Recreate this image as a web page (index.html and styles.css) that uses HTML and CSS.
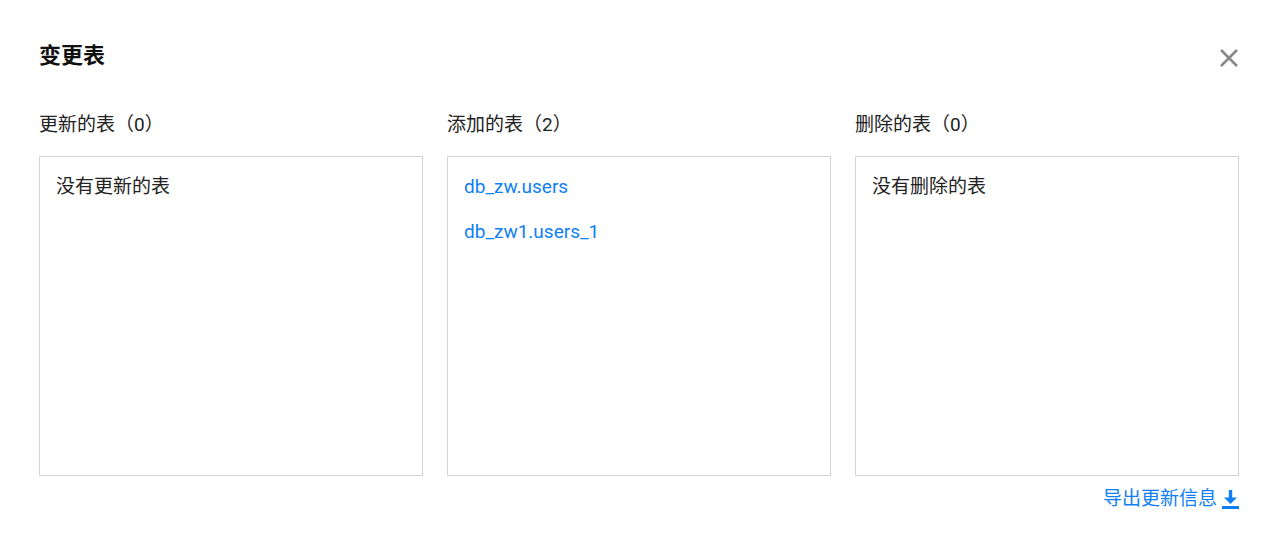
FILE: index.html
```html
<!DOCTYPE html>
<html lang="zh">
<head>
  <meta charset="UTF-8" />
  <title>变更表</title>
  <link rel="stylesheet" href="styles.css">
</head>
<body>
  <div class="dialog">
    <div class="dialog-header">
      <h1>变更表</h1>
      <button class="close" aria-label="关闭">
        <svg width="20" height="20" viewBox="0 0 20 20"><path d="M2 2 L18 18 M18 2 L2 18" stroke="#888" stroke-width="2.6"/></svg>
      </button>
    </div>

    <div class="columns">
      <div class="column">
        <div class="col-title">更新的表（0）</div>
        <div class="col-box">
          <div class="empty">没有更新的表</div>
        </div>
      </div>
      <div class="column">
        <div class="col-title">添加的表（2）</div>
        <div class="col-box">
          <a class="table-link" href="#">db_zw.users</a>
          <a class="table-link" href="#">db_zw1.users_1</a>
        </div>
      </div>
      <div class="column">
        <div class="col-title">删除的表（0）</div>
        <div class="col-box">
          <div class="empty">没有删除的表</div>
        </div>
      </div>
    </div>

    <div class="footer">
      <a class="export" href="#">导出更新信息
        <svg width="17" height="20" viewBox="0 0 17 20"><path d="M8.5 1 V11" stroke="#0f7ff5" stroke-width="3.4"/><path d="M2 8.5 L8.5 15 L15 8.5 Z" fill="#0f7ff5"/><rect x="0" y="17" width="17" height="3" fill="#0f7ff5"/></svg>
      </a>
    </div>
  </div>
</body>
</html>
```

FILE: styles.css
```css
body {
  margin: 0;
  padding: 0;
  background-color: #fff;
  font-family: Roboto, "Noto Sans CJK SC", sans-serif;
  color: #222;
}

.dialog {
  padding: 40px 34px 0 39px;
}

.dialog-header {
  display: flex;
  justify-content: space-between;
  align-items: flex-start;
}

h1 {
  margin: 0;
  font-size: 22px;
  font-weight: 700;
  color: #111;
  line-height: 32px;
}

.close {
  background: none;
  border: none;
  padding: 0;
  margin-top: 8px;
  cursor: pointer;
}

.columns {
  display: flex;
  gap: 24px;
  margin-top: 40px;
}

.column {
  width: 384px;
}

.col-title {
  font-size: 19px;
  line-height: 26px;
  margin-bottom: 18px;
}

.col-box {
  box-sizing: border-box;
  height: 320px;
  border: 1px solid #d3d3d3;
  padding: 17px 16px;
  display: flex;
  flex-direction: column;
  gap: 19px;
}

.empty {
  font-size: 19px;
  line-height: 26px;
}

.table-link {
  font-size: 19px;
  line-height: 26px;
  color: #0f7ff5;
  text-decoration: none;
}

.footer {
  display: flex;
  justify-content: flex-end;
  margin-top: 10px;
}

.export {
  color: #0f7ff5;
  font-size: 19px;
  line-height: 26px;
  text-decoration: none;
  display: flex;
  align-items: center;
  gap: 5px;
}
```
